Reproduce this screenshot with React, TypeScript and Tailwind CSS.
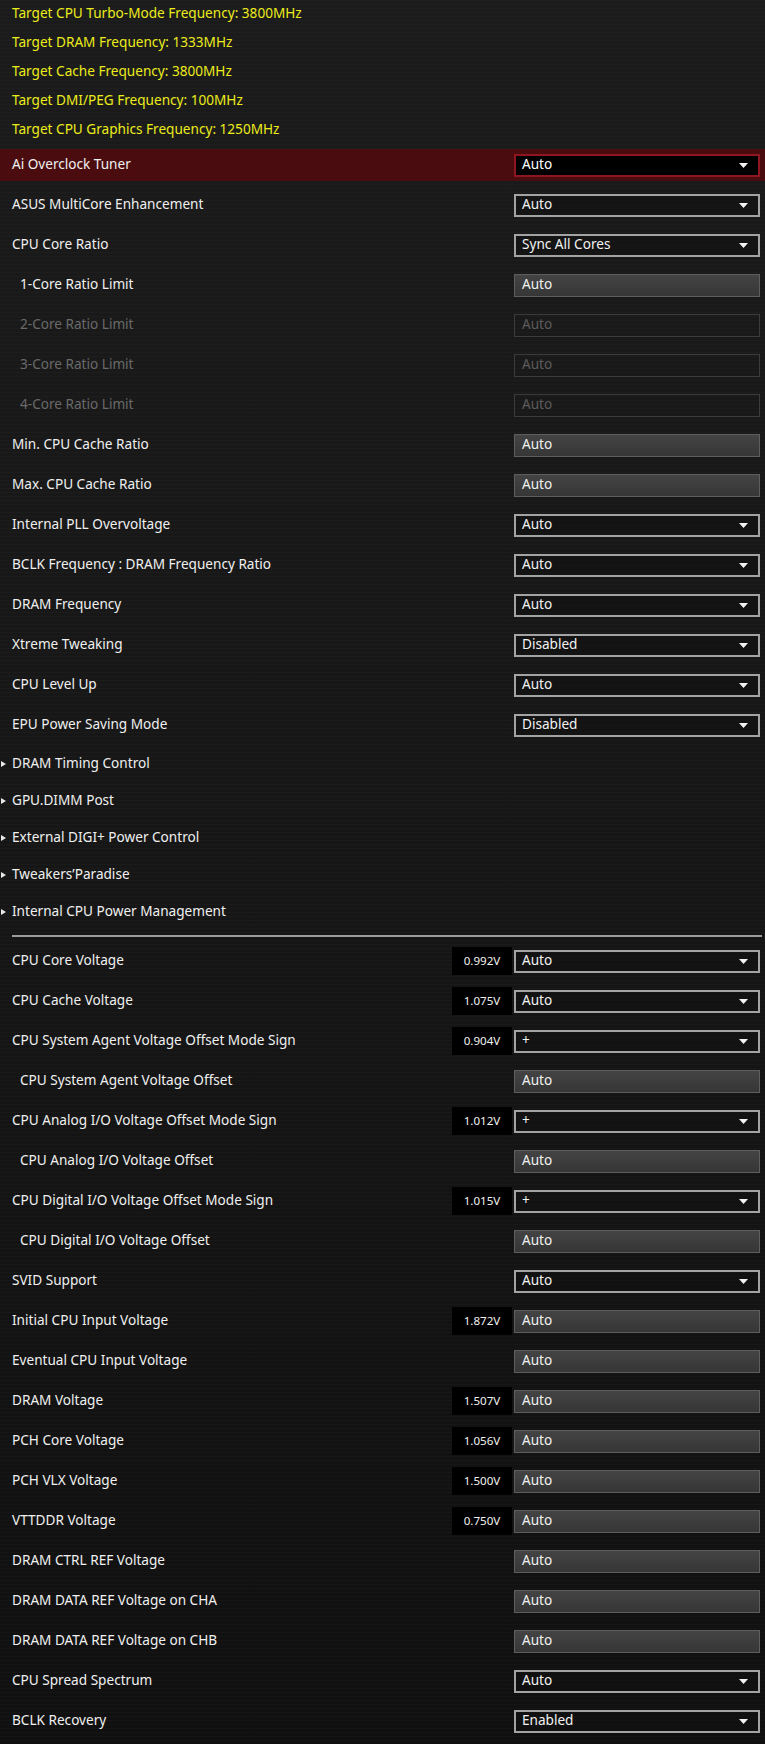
import React from "react";

type Kind = "select" | "field" | "off";

type Item = {
  label: string;
  kind: Kind;
  value: string;
  sub?: boolean;
  volt?: string;
  active?: boolean;
};

const targets = [
  "Target CPU Turbo-Mode Frequency: 3800MHz",
  "Target DRAM Frequency: 1333MHz",
  "Target Cache Frequency: 3800MHz",
  "Target DMI/PEG Frequency: 100MHz",
  "Target CPU Graphics Frequency: 1250MHz",
];

const upper: Item[] = [
  { label: "Ai Overclock Tuner", kind: "select", value: "Auto", active: true },
  { label: "ASUS MultiCore Enhancement", kind: "select", value: "Auto" },
  { label: "CPU Core Ratio", kind: "select", value: "Sync All Cores" },
  { label: "1-Core Ratio Limit", kind: "field", value: "Auto", sub: true },
  { label: "2-Core Ratio Limit", kind: "off", value: "Auto", sub: true },
  { label: "3-Core Ratio Limit", kind: "off", value: "Auto", sub: true },
  { label: "4-Core Ratio Limit", kind: "off", value: "Auto", sub: true },
  { label: "Min. CPU Cache Ratio", kind: "field", value: "Auto" },
  { label: "Max. CPU Cache Ratio", kind: "field", value: "Auto" },
  { label: "Internal PLL Overvoltage", kind: "select", value: "Auto" },
  { label: "BCLK Frequency : DRAM Frequency Ratio", kind: "select", value: "Auto" },
  { label: "DRAM Frequency", kind: "select", value: "Auto" },
  { label: "Xtreme Tweaking", kind: "select", value: "Disabled" },
  { label: "CPU Level Up", kind: "select", value: "Auto" },
  { label: "EPU Power Saving Mode", kind: "select", value: "Disabled" },
];

const submenus = [
  "DRAM Timing Control",
  "GPU.DIMM Post",
  "External DIGI+ Power Control",
  "Tweakers’Paradise",
  "Internal CPU Power Management",
];

const lower: Item[] = [
  { label: "CPU Core Voltage", kind: "select", value: "Auto", volt: "0.992V" },
  { label: "CPU Cache Voltage", kind: "select", value: "Auto", volt: "1.075V" },
  { label: "CPU System Agent Voltage Offset Mode Sign", kind: "select", value: "+", volt: "0.904V" },
  { label: "CPU System Agent Voltage Offset", kind: "field", value: "Auto", sub: true },
  { label: "CPU Analog I/O Voltage Offset Mode Sign", kind: "select", value: "+", volt: "1.012V" },
  { label: "CPU Analog I/O Voltage Offset", kind: "field", value: "Auto", sub: true },
  { label: "CPU Digital I/O Voltage Offset Mode Sign", kind: "select", value: "+", volt: "1.015V" },
  { label: "CPU Digital I/O Voltage Offset", kind: "field", value: "Auto", sub: true },
  { label: "SVID Support", kind: "select", value: "Auto" },
  { label: "Initial CPU Input Voltage", kind: "field", value: "Auto", volt: "1.872V" },
  { label: "Eventual CPU Input Voltage", kind: "field", value: "Auto" },
  { label: "DRAM Voltage", kind: "field", value: "Auto", volt: "1.507V" },
  { label: "PCH Core Voltage", kind: "field", value: "Auto", volt: "1.056V" },
  { label: "PCH VLX Voltage", kind: "field", value: "Auto", volt: "1.500V" },
  { label: "VTTDDR Voltage", kind: "field", value: "Auto", volt: "0.750V" },
  { label: "DRAM CTRL REF Voltage", kind: "field", value: "Auto" },
  { label: "DRAM DATA REF Voltage on CHA", kind: "field", value: "Auto" },
  { label: "DRAM DATA REF Voltage on CHB", kind: "field", value: "Auto" },
  { label: "CPU Spread Spectrum", kind: "select", value: "Auto" },
  { label: "BCLK Recovery", kind: "select", value: "Enabled" },
];

function Caret() {
  return (
    <svg width="9" height="5" viewBox="0 0 9 5" className="shrink-0">
      <polygon points="0,0 9,0 4.5,5" fill="#f2f2f2" />
    </svg>
  );
}

function Control({ item }: { item: Item }) {
  if (item.kind === "select") {
    return (
      <div
        className={
          item.active
            ? "flex h-[23px] w-[246px] items-center justify-between border-2 border-[#8e1620] bg-black pl-[6px] pr-[10px] text-[13.6px] text-white"
            : "flex h-[23px] w-[246px] items-center justify-between border-2 border-[#a3a3a3] bg-[#111111]/60 pl-[6px] pr-[10px] text-[13.6px] text-[#f2f2f2]"
        }
      >
        <span className="pb-[1px]">{item.value}</span>
        <Caret />
      </div>
    );
  }
  if (item.kind === "field") {
    return (
      <div className="flex h-[23px] w-[246px] items-center border border-[#5e5e5e] bg-gradient-to-b from-[#444444] to-[#363636] pl-[7px] text-[13.6px] text-[#f0f0f0]">
        <span className="pb-[1px]">{item.value}</span>
      </div>
    );
  }
  return (
    <div className="flex h-[23px] w-[246px] items-center border border-[#3c3c3c] pl-[7px] text-[13.6px] text-[#5c5c5c]">
      <span className="pb-[1px]">{item.value}</span>
    </div>
  );
}

function SettingRow({ item }: { item: Item }) {
  return (
    <div className="flex h-[40px] items-center">
      <div
        className={
          item.active
            ? "flex h-[32px] w-full items-center bg-[#4b0c0f] pr-[5px]"
            : "flex h-[32px] w-full items-center pr-[5px]"
        }
      >
        <span
          className={
            (item.sub ? "pl-[20px] " : "pl-[12px] ") +
            (item.kind === "off" ? "text-[#6a6a6a]" : "text-[#f0f0f0]") +
            " flex-1 pb-[2px] text-[13.6px]"
          }
        >
          {item.label}
        </span>
        {item.volt && (
          <div className="mr-[2px] flex h-[28px] w-[60px] items-center justify-center bg-black pb-[1px] text-[11.6px] text-[#f2f2f2]">
            {item.volt}
          </div>
        )}
        <Control item={item} />
      </div>
    </div>
  );
}

export default function App() {
  return (
    <div className="min-h-[1744px] w-full overflow-hidden bg-gradient-to-b from-[#1b1b1b] via-[#161616] to-[#101010] font-['Noto_Sans','Open_Sans',sans-serif]">
      <div className="bg-[repeating-linear-gradient(180deg,rgba(255,255,255,0.018)_0px,rgba(255,255,255,0.018)_1px,transparent_1px,transparent_4px)]">
        <div className="flex flex-col">
          {targets.map((t) => (
            <div key={t} className="flex h-[29px] items-center pb-[2px] pl-[12px] text-[13.6px] text-[#ecec1c]">
              {t}
            </div>
          ))}
        </div>

        <div className="flex flex-col">
          {upper.map((it) => (
            <SettingRow key={it.label} item={it} />
          ))}
        </div>

        <div className="flex flex-col">
          {submenus.map((s) => (
            <div key={s} className="flex h-[37px] items-center text-[13.6px] text-[#f0f0f0]">
              <svg width="5" height="6" viewBox="0 0 5 6" className="ml-px mr-[6px] shrink-0">
                <polygon points="0,0 5,3 0,6" fill="#e8e8e8" />
              </svg>
              <span className="pb-[1px]">{s}</span>
            </div>
          ))}
        </div>

        <div className="ml-[12px] mr-[3px] mt-[5px] mb-[4px] h-[2px] bg-[#9a9a9a]" />

        <div className="flex flex-col">
          {lower.map((it) => (
            <SettingRow key={it.label} item={it} />
          ))}
        </div>
      </div>
    </div>
  );
}
